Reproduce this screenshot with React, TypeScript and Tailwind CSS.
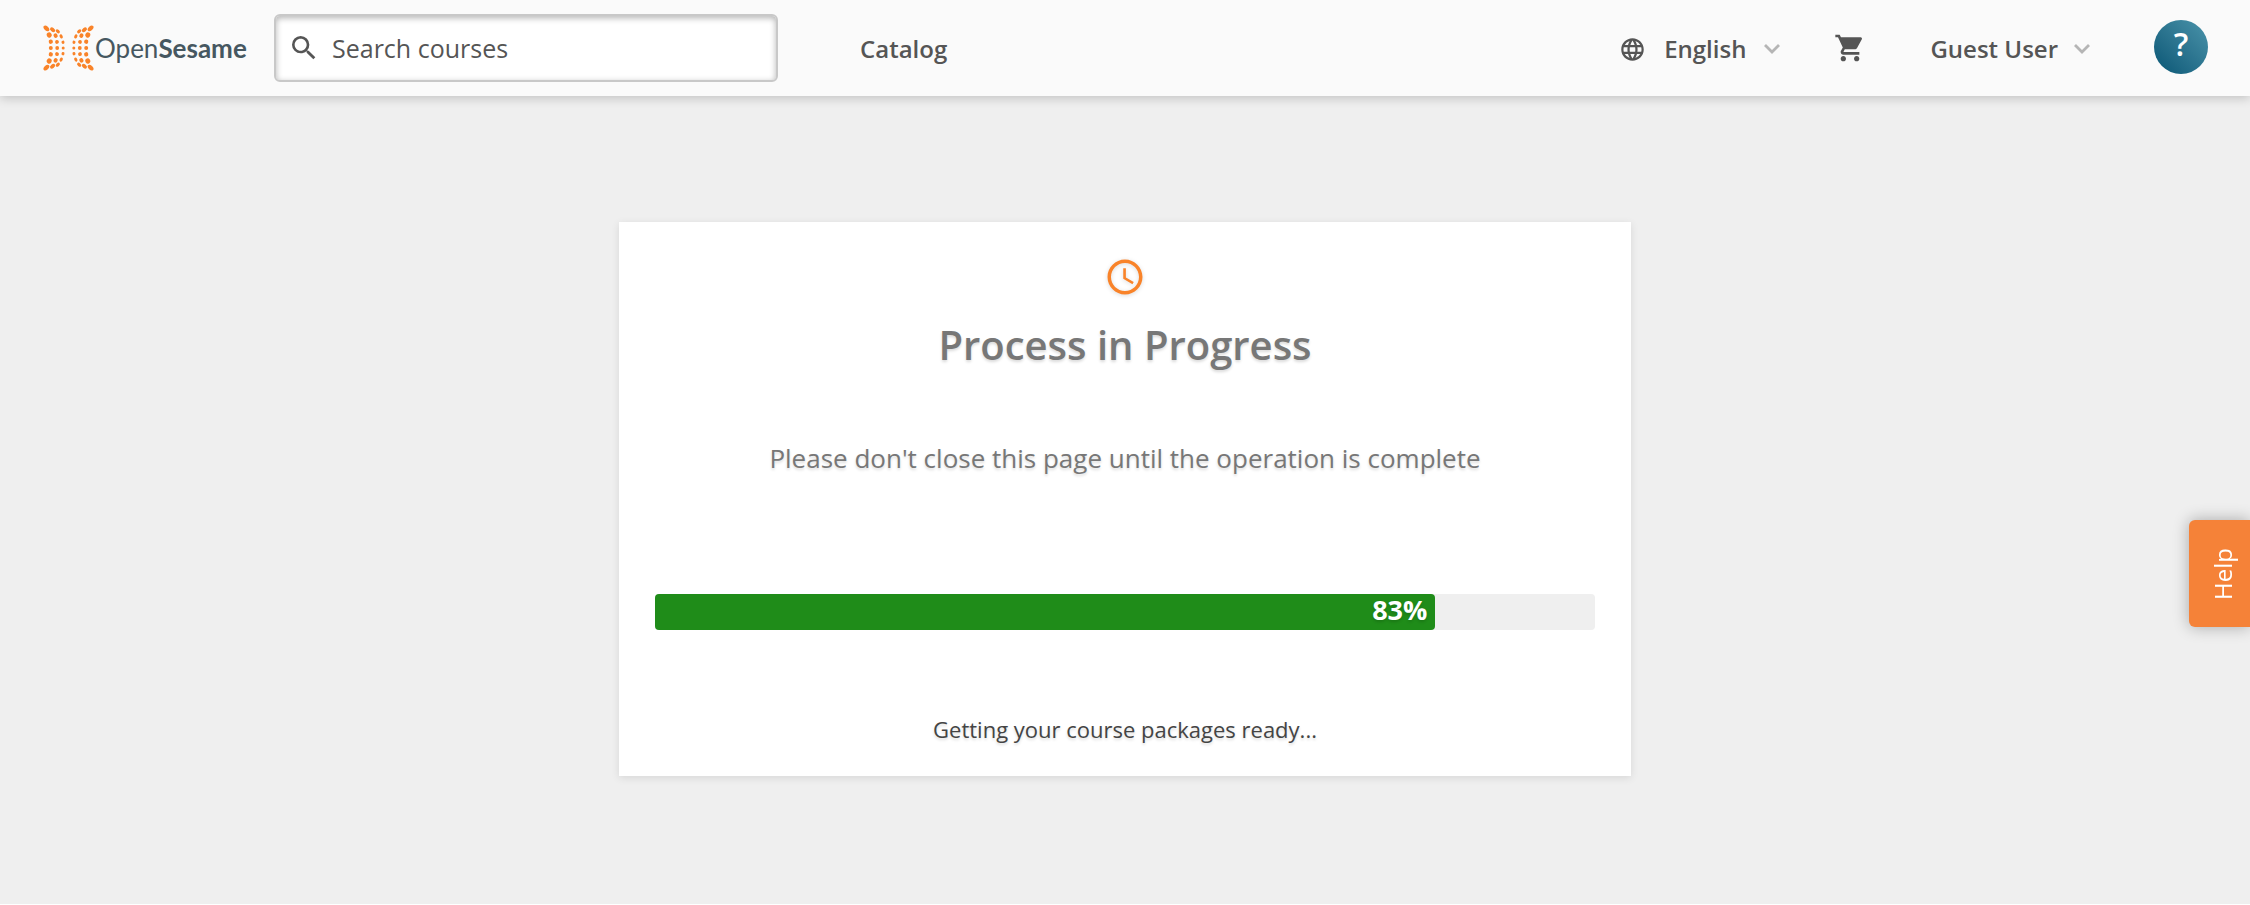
import { MdSearch, MdLanguage, MdShoppingCart, MdAccessTime } from "react-icons/md";

const dots: [number, number, number, number, number][] = [
  [3.4, 3.4, 3.4, 2.1, 42], [9.6, 4.8, 2.9, 1.9, 38], [14.8, 6.3, 2.4, 1.6, 40],
  [6.2, 10, 2.6, 2.4, 55], [12.6, 10.6, 2.3, 2, 55], [18.2, 11.4, 2.1, 1.5, 60],
  [7.8, 16.7, 2.2, 2.1, 80], [14, 16.9, 2, 1.9, 80], [20, 17.3, 1.7, 1.5, 80],
];

function Chevron() {
  return (
    <svg width="16" height="10" viewBox="0 0 16 10" fill="none" stroke="#b5b5b5" strokeWidth="2.8" aria-hidden="true">
      <path d="M1 1 8 8 15 1" />
    </svg>
  );
}

function LogoMark() {
  const quarter = dots.map(([x, y, rx, ry, a]) => (
    <ellipse key={`${x}-${y}`} cx={x} cy={y} rx={rx} ry={ry} transform={`rotate(${a} ${x} ${y})`} />
  ));
  const side = (
    <>
      <g>{quarter}</g>
      <g transform="matrix(1 0 0 -1 0 46)">{quarter}</g>
      <circle cx="7.8" cy="23" r="2" />
      <circle cx="14.2" cy="23" r="1.9" />
      <circle cx="20.2" cy="23" r="1.5" />
    </>
  );
  return (
    <svg width="51" height="46" viewBox="0 0 51 46" fill="#f98329" aria-hidden="true">
      <g>{side}</g>
      <g transform="matrix(-1 0 0 1 51 0)">{side}</g>
    </svg>
  );
}

export default function App() {
  const progress = 83;
  return (
    <div className="flex min-h-screen flex-col border-b border-white bg-[#efefef] font-['Open_Sans',sans-serif] text-[#555]">
      <header className="z-10 flex h-24 items-center bg-[#fafafa] pr-[42px] pl-[43px] shadow-[0_2px_10px_rgba(0,0,0,0.2)]">
        <a href="#" className="flex w-[231px] shrink-0 items-center gap-px font-['Lato',sans-serif] text-[26px] leading-8 text-[#465760]">
          <LogoMark />
          <span>Open<b>Sesame</b></span>
        </a>
        <label className="flex h-[68px] w-[504px] items-center gap-3 rounded-md border-2 border-[#c8c8c8] bg-white pl-3 shadow-[inset_0_2px_6px_rgba(0,0,0,0.3)]">
          <MdSearch size={32} aria-hidden="true" />
          <input type="search" aria-label="Search courses" placeholder="Search courses" className="min-w-0 flex-1 bg-transparent pt-0.5 text-[25px] outline-none placeholder:text-[#555]" />
        </label>
        <nav className="ml-[82px] pt-0.5 text-2xl font-semibold">
          <a href="#">Catalog</a>
        </nav>
        <div className="ml-auto flex items-center text-2xl font-semibold">
          <button className="flex items-center pt-0.5">
            <MdLanguage size={27} className="mr-[18px]" aria-hidden="true" />
            English
            <span className="ml-[18px]"><Chevron /></span>
          </button>
          <button aria-label="Cart" className="ml-[54px]"><MdShoppingCart size={32} /></button>
          <button className="ml-[64px] flex items-center pt-0.5">
            Guest User
            <span className="ml-4"><Chevron /></span>
          </button>
          <button aria-label="Support" className="mb-0.5 ml-[64px] flex size-[54px] items-start justify-center rounded-full bg-linear-to-bl from-[#4a94ab] to-[#045674] pt-1.5 text-[32px] leading-9 text-white">?</button>
        </div>
      </header>
      <main className="mx-auto mt-[126px] flex w-[45%] flex-col items-center bg-white px-9 pt-[34px] pb-[31px] shadow-[0_2px_8px_rgba(0,0,0,0.1)] text-shadow-[0_2px_3px_rgba(0,0,0,0.15)]">
        <MdAccessTime size={42} className="text-[#f98329] drop-shadow-sm" aria-hidden="true" />
        <h1 className="mt-5 text-[40px] leading-[54px] font-semibold text-[#777]">Process in Progress</h1>
        <p className="mt-[68px] text-[26px] leading-9 text-[#777]">Please don't close this page until the operation is complete</p>
        <div role="progressbar" aria-label="Progress" aria-valuenow={progress} aria-valuemin={0} aria-valuemax={100} className="mt-[118px] h-9 w-full rounded bg-[#efefef]">
          <div className="h-9 rounded bg-[#1f8c19] pr-2 text-right text-[27px] leading-8 font-bold text-white" style={{ width: `${progress}%` }}>{progress}%</div>
        </div>
        <p className="mt-[83px] text-[22px] leading-8 text-[#444]">Getting your course packages ready...</p>
      </main>
      <button className="fixed top-[520px] right-0 flex h-[107px] w-[61px] items-center justify-center rounded-l-md bg-[#f58238] pl-1.5 text-2xl text-white shadow-[0_0_16px_rgba(0,0,0,0.3)]">
        <span className="rotate-180 [writing-mode:vertical-rl]">Help</span>
      </button>
    </div>
  );
}
